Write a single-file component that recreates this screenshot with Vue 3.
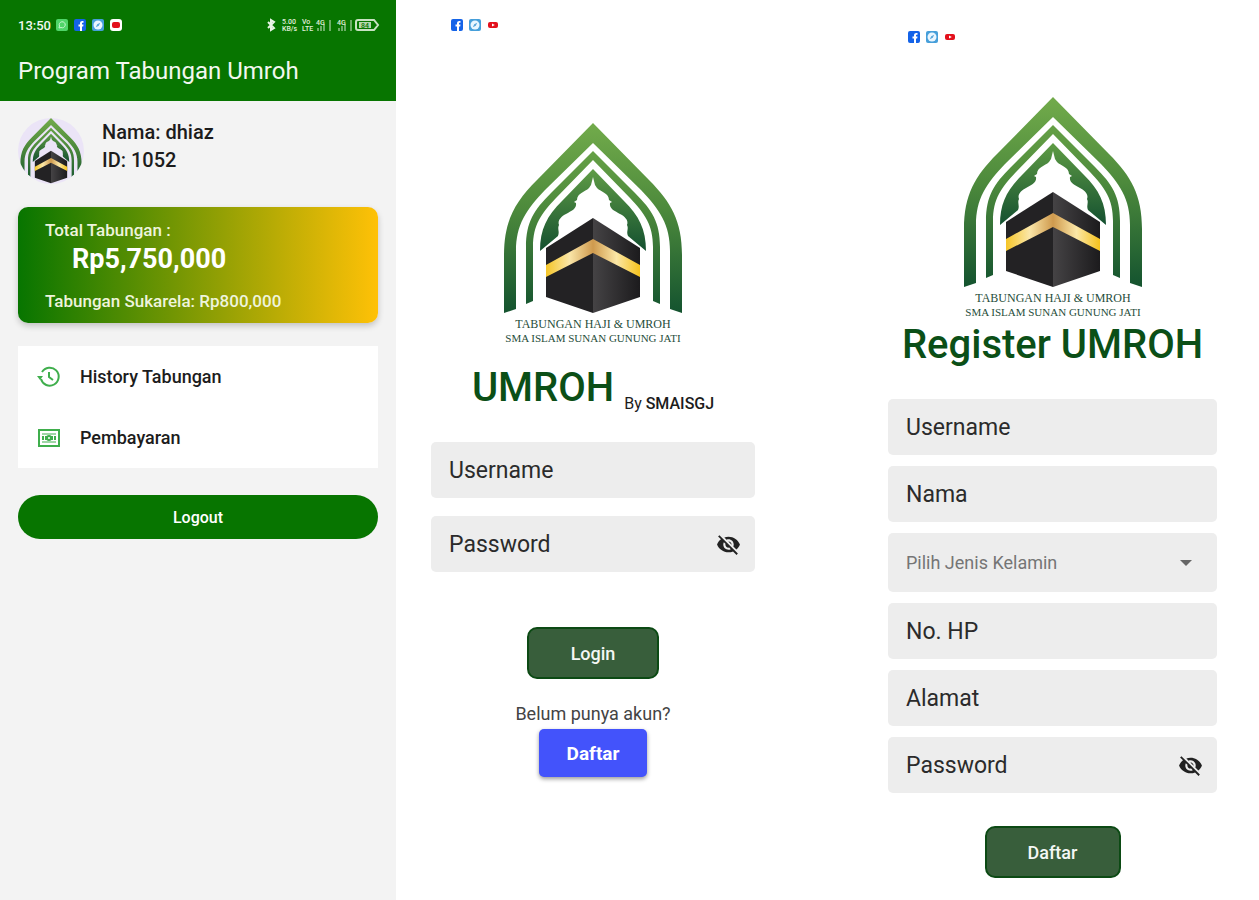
<template>
  <svg class="sprite" aria-hidden="true">
    <defs>
      <linearGradient id="arch-fill" x1="0" y1="0" x2="0" y2="190" gradientUnits="userSpaceOnUse">
        <stop offset="0" stop-color="#72ab4b" />
        <stop offset="0.45" stop-color="#4d8a3c" />
        <stop offset="1" stop-color="#14532f" />
      </linearGradient>
      <linearGradient id="inner-fill" x1="0" y1="46" x2="0" y2="128" gradientUnits="userSpaceOnUse">
        <stop offset="0" stop-color="#5f9c45" />
        <stop offset="1" stop-color="#145030" />
      </linearGradient>
      <linearGradient id="wall-fill" x1="90" y1="0" x2="137" y2="0" gradientUnits="userSpaceOnUse">
        <stop offset="0" stop-color="#454345" />
        <stop offset="1" stop-color="#1c1b1d" />
      </linearGradient>
      <linearGradient id="band-fill" x1="43" y1="0" x2="137" y2="0" gradientUnits="userSpaceOnUse">
        <stop offset="0" stop-color="#f5c527" />
        <stop offset="0.25" stop-color="#fae6a8" />
        <stop offset="0.5" stop-color="#cf9a4e" />
        <stop offset="0.75" stop-color="#fbe7a6" />
        <stop offset="1" stop-color="#f5c21c" />
      </linearGradient>
    </defs>
    <symbol id="emblem" viewBox="0 0 180 192">
      <path fill="url(#arch-fill)" d="M90 0 L146 57 C168 79 179 98 179 132 V190 L167 186 V128 C167 102 157 87 138 67 L90 20 L42 67 C23 87 13 102 13 128 V186 L1 190 V132 C1 98 12 79 34 57 Z" />
      <path fill="url(#arch-fill)" d="M90 28 L132 70 C149 87 157 99 157 124 V181 L150 178 V124 C150 102 142 91 127 75 L90 37 L53 75 C38 91 30 102 30 124 V178 L23 181 V124 C23 99 31 87 48 70 Z" />
      <path fill="url(#inner-fill)" d="M90 46 L121 78 C136 93 143 106 143 128 L125 113 C123 108 126 106 124 102 C126 97 121 93 117 91 C112 88 106 86 107 80 L109 79 L106 77 C106 70 98 69 94 65 L92 62 L90 54 L88 62 L86 65 C82 69 74 70 74 77 L71 79 L73 80 C74 86 68 88 63 91 C59 93 54 97 56 102 C54 106 57 108 55 113 L37 128 C37 106 44 93 59 78 Z" />
      <path fill="#232224" d="M90 95 L43 125 V174 L90 190 Z" />
      <path fill="url(#wall-fill)" d="M90 95 L137 125 V174 L90 190 Z" />
      <path fill="url(#band-fill)" d="M43 142 L90 116 L137 142 V154 L90 130 L43 154 Z" />
    </symbol>
    <symbol id="facebook" viewBox="0 0 14 14">
      <rect x="1" y="1" width="12" height="12" rx="2" fill="#1463e8" />
      <path fill="#fff" d="M7 13 V8.500 H5.500 V6.500 H7 V5.500 C7 3.700 8 3 9.300 3 H10.500 V4.800 H9.700 C9.100 4.800 9 5.100 9 5.600 V6.500 H10.500 L10.200 8.500 H9 V13 Z" />
    </symbol>
    <symbol id="compass" viewBox="0 0 14 14">
      <rect x="1" y="1" width="12" height="12" rx="2" fill="#469fda" />
      <circle cx="7" cy="7" r="4.500" fill="#eaf6ff" />
      <path d="M4.800 9.200 L6.200 6.200 L9.200 4.800 L7.800 7.800 Z" fill="#5aa6da" />
    </symbol>
    <symbol id="youtube" viewBox="0 0 14 14">
      <rect x="2" y="4" width="10" height="6" rx="2" fill="#e3101c" />
      <path d="M6 5.500 L8.800 7 L6 8.500 Z" fill="#fff" />
    </symbol>
    <symbol id="eye-off" viewBox="0 0 24 24">
      <path fill="#222" d="M12 7c2.760 0 5 2.240 5 5 0 .65-.13 1.260-.36 1.830l2.920 2.920c1.510-1.260 2.700-2.890 3.430-4.750-1.730-4.390-6-7.500-11-7.500-1.400 0-2.740.25-3.980.7l2.160 2.160C10.740 7.130 11.350 7 12 7zM2 4.270l2.280 2.280.46.46C3.080 8.300 1.780 10.020 1 12c1.730 4.390 6 7.500 11 7.500 1.550 0 3.030-.3 4.380-.84l.42.42L19.730 22 21 20.730 3.270 3 2 4.270zM7.530 9.800l1.550 1.550c-.05.21-.08.43-.08.65 0 1.660 1.340 3 3 3 .22 0 .44-.03.65-.08l1.550 1.550c-.67.33-1.410.53-2.200.53-2.760 0-5-2.240-5-5 0-.79.2-1.530.53-2.200zm4.310-.78l3.150 3.150.02-.16c0-1.660-1.340-3-3-3l-.17.01z" />
    </symbol>
  </svg>

  <main class="screens">
    <section class="screen home">
      <header class="topbar">
        <div class="statusbar">
          <span class="clock">13:50</span>
          <svg class="app-icon" viewBox="0 0 14 14">
            <rect x="1" y="1" width="12" height="12" rx="2" fill="#4fd568" />
            <path d="M4 10 L4.500 8 A3 3 0 1 1 6 9.500 Z" fill="none" stroke="#c9f7cf" />
          </svg>
          <svg class="app-icon"><use href="#facebook" /></svg>
          <svg class="app-icon"><use href="#compass" /></svg>
          <svg class="app-icon" viewBox="0 0 14 14">
            <rect x="1" y="1" width="12" height="12" rx="3" fill="#fff" />
            <rect x="3" y="4" width="8" height="6" rx="2" fill="#e3101c" />
          </svg>
          <svg class="system-icons" viewBox="0 0 114 16">
            <path d="M2 5 L8 11 L5 13 V3 L8 5 L2 11" fill="none" stroke="#e9f5e6" stroke-width="2" />
            <g class="tiny">
              <text x="16" y="7">5.00</text>
              <text x="16" y="14">KB/s</text>
              <text x="36" y="7">Vo</text>
              <text x="36" y="14">LTE</text>
              <text x="50" y="8">4G</text>
              <text x="71" y="8">4G</text>
            </g>
            <path d="M52 14 V11 M55 14 V9 M58 14 V7 M64 14 V3 M73 14 V11 M76 14 V9 M79 14 V7 M85 14 V3" stroke="#d3e8cd" />
            <path d="M92 3 H108 L112 8 L108 13 H92 Q90 13 90 11 V5 Q90 3 92 3 Z" fill="none" stroke="#c8e2c2" stroke-width="2" />
            <rect x="93" y="5" width="12" height="6" fill="#b4d6ad" />
            <text class="tiny charge" x="95" y="11">84</text>
          </svg>
        </div>
        <h1>Program Tabungan Umroh</h1>
      </header>

      <div class="home-body">
        <div class="profile">
          <svg class="avatar" role="img" aria-label="Foto profil"><use href="#emblem" /></svg>
          <div class="profile-info">
            <p>Nama: dhiaz</p>
            <p>ID: 1052</p>
          </div>
        </div>

        <div class="balance">
          <p>Total Tabungan :</p>
          <p class="amount">Rp5,750,000</p>
          <p class="voluntary">Tabungan Sukarela: Rp800,000</p>
        </div>

        <nav class="menu">
          <a href="#history">
            <svg viewBox="0 0 24 24" fill="none" stroke="#3fae4c" stroke-width="2">
              <path d="M4 14 A9 9 0 1 0 5 7" />
              <path d="M12 7 V12 L16 15" />
              <path d="M0 11 H6 L3 15 Z" fill="#3fae4c" stroke="none" />
            </svg>
            History Tabungan
          </a>
          <a href="#pembayaran">
            <svg viewBox="0 0 24 24" fill="none" stroke="#3fae4c" stroke-width="2">
              <rect x="2" y="4" width="20" height="16" />
              <path d="M5 8 H19 M5 16 H19" stroke-width="1" />
              <path d="M6 10 V14 M9 10 V14 M15 10 V14 M18 10 V14" />
              <circle cx="12" cy="12" r="2" />
            </svg>
            Pembayaran
          </a>
        </nav>

        <button type="button" class="logout">Logout</button>
      </div>
    </section>

    <section class="screen login">
      <div class="app-icons">
        <svg class="app-icon"><use href="#facebook" /></svg>
        <svg class="app-icon"><use href="#compass" /></svg>
        <svg class="app-icon"><use href="#youtube" /></svg>
      </div>
      <svg class="logo" viewBox="0 0 180 220">
        <use href="#emblem" width="180" height="192" />
        <text class="logo-title" x="90" y="205">TABUNGAN HAJI &amp; UMROH</text>
        <text x="90" y="219">SMA ISLAM SUNAN GUNUNG JATI</text>
      </svg>
      <div class="brand">
        <h2>UMROH</h2>
        <p>By <b>SMAISGJ</b></p>
      </div>
      <form class="form" @submit.prevent>
        <div class="field">
          <input v-model="login.username" type="text" placeholder="Username" aria-label="Username">
        </div>
        <div class="field">
          <input v-model="login.password" :type="showLogin ? 'text' : 'password'" placeholder="Password" aria-label="Password">
          <button type="button" class="toggle" aria-label="Tampilkan password" @click="showLogin = !showLogin">
            <svg><use href="#eye-off" /></svg>
          </button>
        </div>
        <button type="submit" class="submit">Login</button>
      </form>
      <p class="question">Belum punya akun?</p>
      <button type="button" class="signup">Daftar</button>
    </section>

    <section class="screen register">
      <div class="app-icons">
        <svg class="app-icon"><use href="#facebook" /></svg>
        <svg class="app-icon"><use href="#compass" /></svg>
        <svg class="app-icon"><use href="#youtube" /></svg>
      </div>
      <svg class="logo" viewBox="0 0 180 220">
        <use href="#emblem" width="180" height="192" />
        <text class="logo-title" x="90" y="205">TABUNGAN HAJI &amp; UMROH</text>
        <text x="90" y="219">SMA ISLAM SUNAN GUNUNG JATI</text>
      </svg>
      <h2>Register UMROH</h2>
      <form class="form" @submit.prevent>
        <div v-for="field in fields" :key="field.key" class="field" :class="{ choice: field.options }">
          <template v-if="field.options">
            <select v-model="register[field.key]" :aria-label="field.label">
              <option value="">{{ field.label }}</option>
              <option v-for="option in field.options" :key="option">{{ option }}</option>
            </select>
            <span class="caret"></span>
          </template>
          <input v-else v-model="register[field.key]" :type="inputType(field)" :placeholder="field.label" :aria-label="field.label">
          <button v-if="field.secret" type="button" class="toggle" aria-label="Tampilkan password" @click="showRegister = !showRegister">
            <svg><use href="#eye-off" /></svg>
          </button>
        </div>
        <button type="submit" class="submit">Daftar</button>
      </form>
    </section>
  </main>
</template>

<script setup>
import { ref, reactive } from 'vue'

const showLogin = ref(false)
const showRegister = ref(false)

const login = reactive({ username: '', password: '' })
const register = reactive({ username: '', nama: '', kelamin: '', hp: '', alamat: '', password: '' })

const fields = [
  { key: 'username', label: 'Username' },
  { key: 'nama', label: 'Nama' },
  { key: 'kelamin', label: 'Pilih Jenis Kelamin', options: ['Laki-laki', 'Perempuan'] },
  { key: 'hp', label: 'No. HP' },
  { key: 'alamat', label: 'Alamat' },
  { key: 'password', label: 'Password', secret: true }
]

const inputType = (field) => field.secret && !showRegister.value ? 'password' : 'text'
</script>

<style>
body {
  margin: 0;
  background: #fff;
}
</style>

<style scoped>
.sprite {
  position: absolute;
  width: 0;
  height: 0;
}

.screens {
  display: grid;
  grid-template-columns: minmax(0, 396fr) minmax(0, 449fr) minmax(0, 414fr);
  min-height: 100vh;
  font-family: Roboto, "Liberation Sans", sans-serif;
  color: #1c1c1c;
}

.screens *,
.screens {
  box-sizing: border-box;
}

h1,
h2,
p {
  margin: 0;
}

button,
input,
select {
  font-family: inherit;
}

button {
  cursor: pointer;
}

.app-icon {
  width: 14px;
  height: 14px;
}

/* Home */
.home {
  background: #f3f3f3;
}

.topbar {
  height: 101px;
  padding: 16px 16px 0 18px;
  background: #077500;
  color: #f2f8f0;
}

.statusbar {
  display: flex;
  align-items: center;
  gap: 4px;
  height: 18px;
}

.clock {
  font-size: 13px;
  font-weight: 500;
}

.system-icons {
  width: 114px;
  height: 16px;
  margin-left: auto;
}

.tiny {
  font-size: 7px;
  font-weight: 500;
  fill: #e0efdb;
}

.charge {
  fill: #077500;
}

.topbar h1 {
  margin-top: 20px;
  font-size: 24px;
  line-height: 34px;
  font-weight: 400;
}

.home-body {
  padding: 17px 18px 0;
}

.profile {
  display: flex;
  align-items: flex-start;
  gap: 18px;
  height: 66px;
}

.avatar {
  width: 66px;
  height: 66px;
  border-radius: 50%;
  background: #ebe4f7;
}

.profile-info {
  font-size: 20px;
  line-height: 28px;
  font-weight: 500;
}

.balance {
  height: 116px;
  margin-top: 23px;
  padding: 12px 27px;
  border-radius: 10px;
  background: linear-gradient(90deg, #077500, #ffc107);
  box-shadow: 0 3px 6px rgba(0, 0, 0, 0.2);
  color: #eef4dc;
  font-size: 17px;
  line-height: 22px;
  font-weight: 500;
}

.balance .amount {
  padding-left: 27px;
  color: #fff;
  font-size: 27px;
  line-height: 36px;
  font-weight: 700;
}

.balance .voluntary {
  margin-top: 13px;
}

.menu {
  margin-top: 23px;
  background: #fff;
}

.menu a {
  display: flex;
  align-items: center;
  gap: 19px;
  height: 61px;
  padding: 0 19px;
  color: #1c1c1c;
  font-size: 18px;
  font-weight: 500;
  text-decoration: none;
}

.menu svg {
  width: 24px;
  height: 24px;
}

.logout {
  display: block;
  width: 100%;
  height: 44px;
  margin-top: 27px;
  border: 0;
  border-radius: 22px;
  background: #077500;
  color: #fff;
  font-size: 16px;
  font-weight: 500;
}

/* Login and register */
.login,
.register {
  display: flex;
  flex-direction: column;
  align-items: center;
}

.login {
  padding: 18px 90px 0 35px;
}

.register {
  padding: 30px 42px 0 43px;
}

.app-icons {
  display: flex;
  gap: 4px;
  align-self: stretch;
  padding-left: 19px;
}

.logo {
  width: 180px;
  height: 220px;
}

.login .logo {
  margin-top: 91px;
}

.register .logo {
  margin-top: 53px;
}

.logo text {
  font-family: "Liberation Serif", serif;
  font-size: 11px;
  fill: #1f4d3a;
  text-anchor: middle;
}

.logo .logo-title {
  font-size: 12px;
}

h2 {
  color: #0b4f17;
  font-size: 40px;
  line-height: 48px;
  font-weight: 500;
}

.brand {
  display: flex;
  align-items: flex-end;
  gap: 10px;
  margin-top: 21px;
}

.brand p {
  font-size: 16px;
  line-height: 16px;
}

.brand b {
  font-weight: 500;
}

.register h2 {
  margin-top: 4px;
}

.form {
  display: flex;
  flex-direction: column;
  width: 100%;
}

.login .form {
  gap: 18px;
  margin-top: 30px;
}

.register .form {
  gap: 11px;
  margin-top: 30px;
}

.field {
  display: flex;
  align-items: center;
  height: 56px;
  padding: 0 14px 0 18px;
  border-radius: 5px;
  background: #ededed;
}

.choice {
  height: 59px;
  padding-right: 25px;
}

.field input,
.field select {
  flex: 1;
  min-width: 0;
  padding: 0;
  border: 0;
  outline: 0;
  background: transparent;
  color: #2b2b2b;
  font-size: 23px;
}

.field input::placeholder {
  color: #2b2b2b;
  opacity: 1;
}

.field select {
  appearance: none;
  color: #757575;
  font-size: 18px;
}

.caret {
  border: 6px solid transparent;
  border-top-color: #666;
  border-bottom: 0;
}

.toggle {
  display: flex;
  padding: 0;
  border: 0;
  background: none;
}

.toggle svg {
  width: 25px;
  height: 25px;
}

.submit {
  align-self: center;
  width: 136px;
  height: 52px;
  border: 2px solid #0c4a14;
  border-radius: 10px;
  background: #385e3b;
  color: #f4f7f4;
  font-size: 18px;
  font-weight: 500;
}

.login .submit {
  width: 132px;
  margin-top: 37px;
}

.register .submit {
  margin-top: 22px;
}

.question {
  margin-top: 24px;
  font-size: 18px;
  line-height: 22px;
  color: #444;
}

.signup {
  width: 108px;
  height: 48px;
  margin-top: 4px;
  border: 0;
  border-radius: 5px;
  background: #4353fb;
  box-shadow: 0 2px 4px rgba(0, 0, 0, 0.4);
  color: #fff;
  font-size: 19px;
  font-weight: 700;
}
</style>
